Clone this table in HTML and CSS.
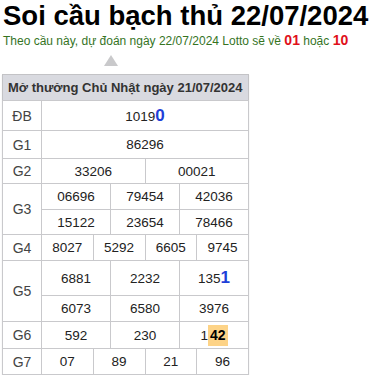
FILE: index.html
```html
<!DOCTYPE html>
<html lang="vi">
<head>
  <meta charset="UTF-8">
  <title>Soi cầu bạch thủ 22/07/2024</title>
  <link rel="stylesheet" href="styles.css">
</head>
<body>

<h1 class="title">Soi cầu bạch thủ 22/07/2024</h1>
<p class="subtitle">Theo cầu này, dự đoán ngày 22/07/2024 Lotto sẽ về <b class="red">01</b> hoặc <b class="red">10</b></p>

<div class="arrow-row"><span class="arrow"></span></div>

<table class="kq">
  <colgroup>
    <col class="c-label">
    <col span="12">
  </colgroup>
  <tr class="r-head"><th colspan="13">Mở thưởng Chủ Nhật ngày 21/07/2024</th></tr>
  <tr class="r-db"><td class="lbl">ĐB</td><td colspan="12">1019<b class="blue">0</b></td></tr>
  <tr class="r-g1"><td class="lbl">G1</td><td colspan="12">86296</td></tr>
  <tr class="r-g2"><td class="lbl">G2</td><td colspan="6">33206</td><td colspan="6">00021</td></tr>
  <tr class="r-g3a"><td class="lbl" rowspan="2">G3</td><td colspan="4">06696</td><td colspan="4">79454</td><td colspan="4">42036</td></tr>
  <tr class="r-g3b"><td colspan="4">15122</td><td colspan="4">23654</td><td colspan="4">78466</td></tr>
  <tr class="r-g4"><td class="lbl">G4</td><td colspan="3">8027</td><td colspan="3">5292</td><td colspan="3">6605</td><td colspan="3">9745</td></tr>
  <tr class="r-g5a"><td class="lbl" rowspan="2">G5</td><td colspan="4">6881</td><td colspan="4">2232</td><td colspan="4">135<b class="blue">1</b></td></tr>
  <tr class="r-g5b"><td colspan="4">6073</td><td colspan="4">6580</td><td colspan="4">3976</td></tr>
  <tr class="r-g6"><td class="lbl">G6</td><td colspan="4">592</td><td colspan="4">230</td><td colspan="4">1<b class="mark">42</b></td></tr>
  <tr class="r-g7"><td class="lbl">G7</td><td colspan="3">07</td><td colspan="3">89</td><td colspan="3">21</td><td colspan="3">96</td></tr>
</table>

</body>
</html>
```

FILE: styles.css
```css
* { box-sizing: border-box; }
body { margin: 0; padding: 0 2px; font-family: "Liberation Sans", Arial, sans-serif; color: #222; background: #fff; }

.title { margin: 0 0 0 1px; font-size: 27.5px; font-weight: bold; color: #000; line-height: 31px; }
.subtitle { margin: 0; padding-left: 1px; font-size: 12px; line-height: 18px; color: #35741f; }
.subtitle .red { color: #e0101a; font-size: 14px; }

.arrow-row { height: 24px; padding: 5px 0 0 102px; }
.arrow { display: block; width: 0; height: 0; border-left: 7px solid transparent; border-right: 7px solid transparent; border-bottom: 11px solid #c9c9cb; }

.kq { width: 247px; table-layout: fixed; border-collapse: collapse; border: 1px solid #c3c3c6; box-shadow: 0 1px 1px #e2e2e2; }
.kq .c-label { width: 39px; }
.kq th { background: #d9dae0; color: #333; font-size: 13px; font-weight: bold; text-align: left; padding: 0 5px; height: 26px; }
.kq td { border: 1px solid #c9c9cc; text-align: center; font-size: 13.5px; padding: 0; color: #222; }
.kq td.lbl { color: #444; font-size: 14px; }

.blue { color: #1e3fd8; font-size: 17px; }
.mark { display: inline-block; background: #fdd387; color: #000; font-size: 14px; padding: 0 2px; line-height: 21px; }

.r-db { height: 30px; }
.r-g1 { height: 28px; }
.r-g2 { height: 25px; }
.r-g3a { height: 26px; }
.r-g3b { height: 25px; }
.r-g4 { height: 26px; }
.r-g5a { height: 35px; }
.r-g5b { height: 26px; }
.r-g6 { height: 27px; }
.r-g7 { height: 26px; }
```
